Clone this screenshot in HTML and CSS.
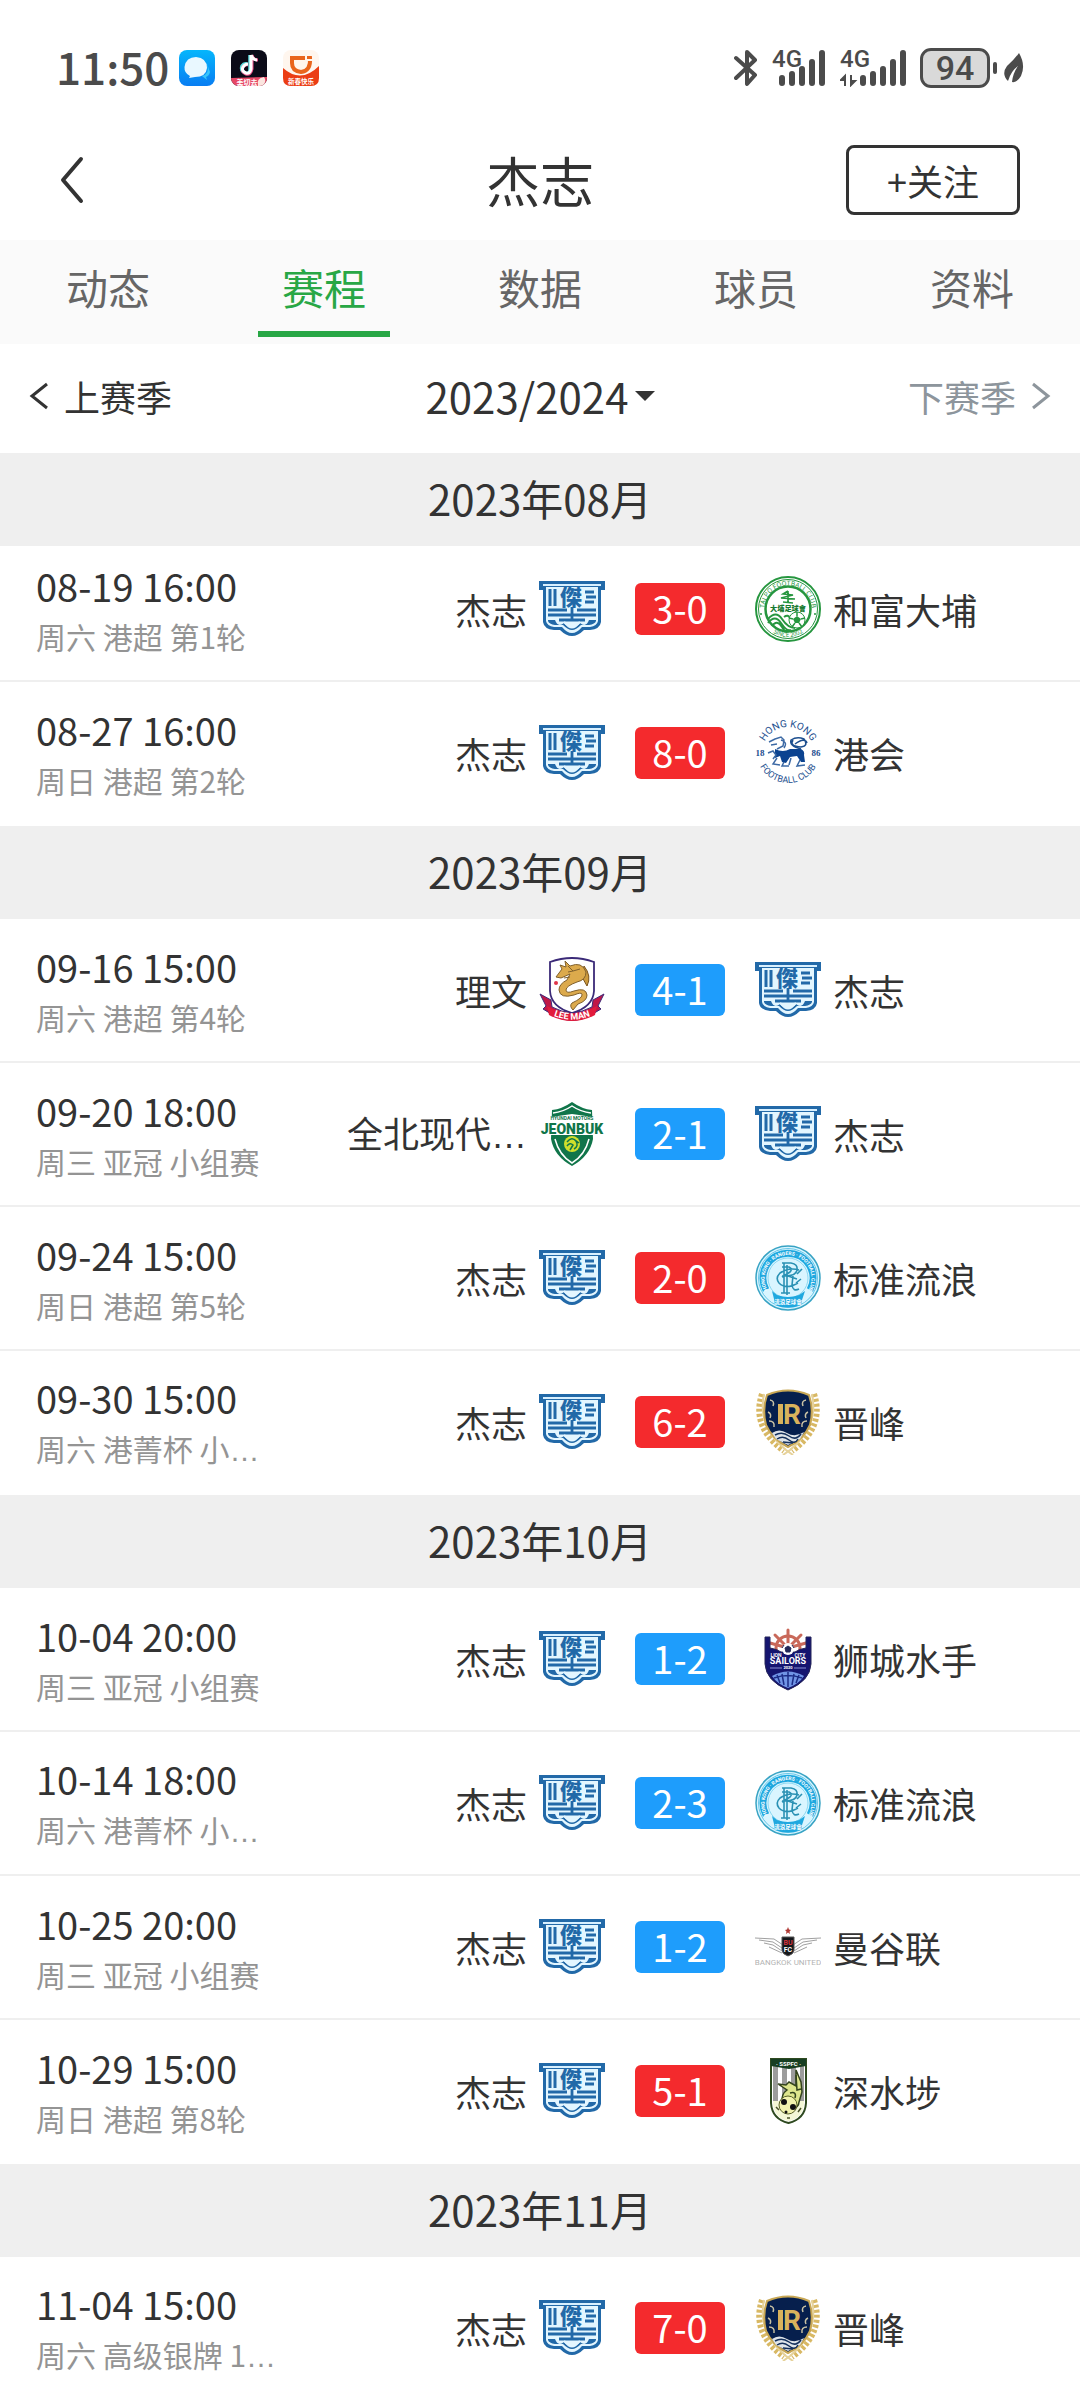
FILE: index.html
```
<!DOCTYPE html>
<html lang="zh-CN">
<head>
  <meta charset="UTF-8">
  <title>杰志 - 赛程</title>
  <meta name="viewport" content="width=device-width, initial-scale=1.0">
  <link rel="stylesheet" href="styles.css">
</head>
<body>
  <!-- Club crests, reused by the match rows -->
  <svg class="sprite" aria-hidden="true">
    <symbol id="kitchee" viewBox="0 0 66 66">
      <path d="M0 5H66V14H62V46Q61 53 51 54L45 54Q39 60 33 60Q27 60 21 54L15 54Q5 53 4 46V14H0Z" fill="#2269a8"/>
      <path d="M4 9H62" stroke="#d8f0ff" stroke-width="2"/>
      <path d="M7 11H59V45Q58 50 51 51L43 51Q38 57 33 57Q28 57 23 51L15 51Q8 50 7 45Z" fill="#e3f6ff"/>
      <path d="M11 13V30M16 13V30M55 16H46M57 21H47M55 26H46" stroke="#2269a8" stroke-width="3"/>
      <text x="32" y="29" text-anchor="middle" font-size="22" font-weight="900" fill="#2269a8">傑</text>
      <path d="M9 34H28M38 34H57M9 39H57M33 31V43M20 44H46" stroke="#2269a8" stroke-width="2.8" fill="none"/>
      <path d="M9 44H16Q19 52 25 47Q33 58 41 47Q47 52 50 44H57V45Q56 48 50 49H42Q37 54 33 54Q29 54 24 49H16Q10 48 9 45Z" fill="#2269a8"/>
      <path d="M25 46Q33 54 41 46" fill="none" stroke="#e3f6ff" stroke-width="2"/>
    </symbol>

    <symbol id="taipo" viewBox="0 0 66 66">
      <circle cx="33" cy="33" r="32" fill="#fff" stroke="#26963f" stroke-width="2"/>
      <circle cx="33" cy="33" r="29.500" fill="none" stroke="#26963f"/>
      <circle cx="33" cy="33" r="22.500" fill="#fff" stroke="#26963f" stroke-width="2.500"/>
      <path id="tp-top" d="M9.500 33A23.500 23.500 0 0 1 56.500 33" fill="none"/>
      <path id="tp-low" d="M5 33A28 28 0 0 0 61 33" fill="none"/>
      <text font-size="6.500" fill="#26963f" text-anchor="middle"><textPath href="#tp-top" startOffset="50%">TAI PO FOOTBALL CLUB</textPath></text>
      <text font-size="6" fill="#26963f" text-anchor="middle"><textPath href="#tp-low" startOffset="50%">SINCE 2002</textPath></text>
      <path d="M33 15L28 18L38 19L26 22L40 23M28 26L38 27M33 15V27" fill="none" stroke="#26963f" stroke-width="1.600"/>
      <text x="33" y="35" font-size="7.200" font-weight="900" fill="#167a30" text-anchor="middle">大埔足球會</text>
      <path d="M13 43Q21 34 27 43T40 52M13 47Q20 38 26 47T36 54M17 50Q22 43 27 51T32 54M29 41Q33 38 35 42" fill="none" stroke="#26963f" stroke-width="2"/>
      <circle cx="42" cy="44" r="8" fill="#fff" stroke="#26963f"/>
      <path d="M42 40L46 43L44 47H40L38 43Z" fill="#26963f"/>
      <path d="M42 36V40M46 43L50 42M44 47L47 51M40 47L37 51M38 43L34 42" stroke="#26963f" stroke-width="1.500"/>
      <circle cx="6" cy="38" r="1" fill="#26963f"/><circle cx="60" cy="38" r="1" fill="#26963f"/>
    </symbol>

    <symbol id="hkfc" viewBox="0 0 66 66">
      <path id="hk-top" d="M7 33A26 26 0 0 1 59 33" fill="none"/>
      <path id="hk-low" d="M1 31A32 32 0 0 0 65 31" fill="none"/>
      <g fill="#1d4f8f" text-anchor="middle">
        <text class="crest-latin" font-size="10"><textPath href="#hk-top" startOffset="50%">HONG KONG</textPath></text>
        <text class="crest-latin" font-size="9"><textPath href="#hk-low" startOffset="50%">FOOTBALL CLUB</textPath></text>
        <text class="crest-serif" x="5" y="36" font-size="9" font-weight="700">18</text>
        <text class="crest-serif" x="61" y="36" font-size="9" font-weight="700">86</text>
      </g>
      <path d="M20 29Q28 33 35 29L46 29Q50 31 49 35L50 42H46L42 36L35 37L31 43L27 42L25 36L20 38Z" fill="#0c4390"/>
      <path d="M14 22L20 19L26 17L29 20L28 26L22 29M16 25L22 24M13 33L18 31L21 35L18 39M22 38L18 44L25 45M29 42L27 46L34 46M36 38L34 45M45 40L42 46L50 45M26 20Q33 22 29 28" fill="none" stroke="#3d6aa5" stroke-width="1.500"/>
      <path d="M46 29Q34 26 36 20Q42 16 49 19Q54 26 46 27Q34 26 38 20M40 24Q50 17 52 23" fill="none" stroke="#1d4f8f" stroke-width="1.500"/>
    </symbol>

    <symbol id="leeman" viewBox="0 0 66 66">
      <path d="M1 37L12 43L13 50Q33 61 53 50L54 43L65 37L59 49L62 52L52 58Q33 69 14 58L4 52L7 49Z" fill="#c01747" stroke="#3e2a78"/>
      <path d="M11 5Q33 -3 55 5V34Q54 50 33 56Q12 50 11 34Z" fill="#fff" stroke="#3b2a78" stroke-width="1.800"/>
      <path d="M8 49Q33 64 58 49L56 58Q33 70 10 58Z" fill="#e21b3c"/>
      <path id="lm-arc" d="M10 57Q33 68 56 57" fill="none"/>
      <text class="crest-latin" font-size="9" font-weight="700" fill="#fff" text-anchor="middle"><textPath href="#lm-arc" startOffset="50%">LEE MAN</textPath></text>
      <path d="M45 9Q53 19 48 29L43 20Z" fill="#cc9a3e" stroke="#7a531d"/>
      <path d="M17 20L23 12L21 8L27 10L26 4L31 9Q43 4 47 15Q47 23 38 25Q27 29 27 33Q27 37 35 34Q47 30 48 38Q48 44 39 47L34 53Q30 49 33 46Q44 41 43 37Q42 35 35 38Q21 42 20 33Q20 27 28 23L31 17L22 21Z" fill="#dcaa4c" stroke="#80602c"/>
      <path d="M29 9L34 14L29 15M34 14L41 12M25 21L31 20" fill="none" stroke="#80602c"/>
      <circle cx="17" cy="26" r="2" fill="#e03448"/>
    </symbol>

    <symbol id="jeonbuk" viewBox="0 0 66 66">
      <path d="M33 1Q43 8 53 9L54 38Q51 55 33 65Q15 55 12 38L13 9Q23 8 33 1Z" fill="#10754a"/>
      <path d="M14 12Q24 11 33 5Q42 11 52 12" fill="none" stroke="#fff" stroke-width="1.500"/>
      <path d="M12 16L33 13L54 16V21H12ZM1 20H65V34H1Z" fill="#fff"/>
      <text class="crest-latin" x="33" y="19" font-size="5" font-weight="700" fill="#10754a" text-anchor="middle">HYUNDAI MOTORS</text>
      <text class="crest-latin" x="33" y="33" font-size="14" font-weight="900" fill="#10754a" text-anchor="middle">JEONBUK</text>
      <path d="M16 38Q20 54 33 62Q46 54 50 38" fill="none" stroke="#fff" stroke-width="1.500"/>
      <circle cx="33" cy="43" r="8" fill="#d0de2c"/>
      <path d="M28 41Q33 35 37 40Q40 45 35 48M28 45Q31 41 34 44L31 49M36 39L40 42" fill="none" stroke="#10754a" stroke-width="1.500"/>
    </symbol>

    <symbol id="rangers" viewBox="0 0 66 66">
      <circle cx="33" cy="33" r="32" fill="#d9f5ff" stroke="#38a3c4" stroke-width="1.500"/>
      <circle cx="33" cy="33" r="29.500" fill="none" stroke="#67c7e8"/>
      <path d="M11 45A25 25 0 1 1 55 45" fill="none" stroke="#1fa8df" stroke-width="7"/>
      <circle cx="33" cy="33" r="20" fill="none" stroke="#8cd9f2"/>
      <path id="rg-top" d="M12 44A23.500 23.500 0 1 1 54 44" fill="none"/>
      <text class="crest-latin" font-size="5" font-weight="700" fill="#fff" text-anchor="middle"><textPath href="#rg-top" startOffset="50%">HONG KONG · RANGERS · FOOTBALL CLUB</textPath></text>
      <path d="M17 46L22 50Q33 54 44 50L50 46L47 55L46 60Q33 65 20 60L19 54Z" fill="#1fa8df"/>
      <text x="33" y="59" font-size="5.500" font-weight="700" fill="#fff" text-anchor="middle">流浪足球會</text>
      <path d="M27 18H36Q43 19 42 25Q41 31 30 31H27M29 18V48M32 20V50M26 48H35M38 31L37 40Q38 47 44 44M44 25Q34 22 25 28Q20 33 24 38Q31 45 43 38M47 24L42 29M33 31L42 34M46 34L41 38M27 22H34Q38 24 35 27L27 32" fill="none" stroke="#2a91b4" stroke-width="1.600"/>
    </symbol>

    <symbol id="rcfc" viewBox="0 0 66 66">
      <g fill="none" stroke="#d8b864" stroke-width="6" stroke-dasharray="3 2">
        <path d="M7 5Q-4 38 29 62"/>
        <path d="M59 5Q70 38 37 62"/>
      </g>
      <g fill="none" stroke="#e6d29a" stroke-width="2">
        <path d="M9 5Q2 37 31 61L38 66M57 5Q64 37 35 61L28 66"/>
      </g>
      <path d="M12 6Q33 -3 54 6Q59 20 55 36Q49 50 33 58Q17 50 11 36Q7 20 12 6Z" fill="#061f4d" stroke="#c8a754" stroke-width="2"/>
      <path d="M15 11Q20 12 18 17M51 11Q46 12 48 17M13 23Q17 25 15 29M53 23Q49 25 51 29M14 32Q20 32 19 38M52 32Q46 32 47 38" fill="none" stroke="#c9c2a4" stroke-width="1.500"/>
      <path d="M17 44Q24 39 32 44T49 43L45 50L33 56L21 50Z" fill="#dfe4e9"/>
      <path d="M20 46Q27 42 34 47T46 45M22 50Q28 46 34 51T43 50M28 53L38 54" fill="none" stroke="#14305c" stroke-width="1.500"/>
      <path d="M23 15H28V35H23Z" fill="#d9b25c"/>
      <text class="crest-latin" x="37" y="35" font-size="28" font-weight="700" fill="#d9b25c" text-anchor="middle">R</text>
    </symbol>

    <symbol id="sailors" viewBox="0 0 66 66">
      <g fill="none" stroke="#c9695a" stroke-width="3" stroke-linecap="round">
        <circle cx="33" cy="22" r="12"/>
        <path d="M33 22V4M33 22L20 9M33 22L46 9M33 22L15 17M33 22L51 17"/>
      </g>
      <path d="M10 11H15V22Q22 23 26 26H40Q44 23 51 22V11H56V38Q55 55 33 64Q11 55 10 38Z" fill="#151570" stroke="#252558"/>
      <circle cx="33" cy="23" r="6" fill="#fff"/>
      <path d="M33 20L36 22L35 26H31L30 22ZM27 22L29 19M39 22L37 19" fill="#222858" stroke="#222858"/>
      <g class="crest-latin" fill="#fff" text-anchor="middle" font-weight="700">
        <text x="21" y="31" font-size="5">LION</text>
        <text x="45" y="31" font-size="5">CITY</text>
        <text x="33" y="38" font-size="9">SAILORS</text>
        <text x="33" y="43" font-size="4">2020</text>
      </g>
      <path d="M15 42H27M39 42H51" stroke="#8790d4"/>
      <path d="M17 50Q33 41 49 50Q44 58 33 62Q22 58 17 50Z" fill="#7195e6"/>
      <path d="M22 49L25 57M27 48L29 59M33 46V61M39 48L37 59M44 49L41 57M19 52Q33 47 47 52" fill="none" stroke="#1b2c86" stroke-width="1.500"/>
    </symbol>

    <symbol id="bangkok" viewBox="0 0 66 66">
      <path d="M33 13L34 15.500L36 16L34.500 17.500L35 20L33 18.500L31 20L31.500 17.500L30 16L32 15.500Z" fill="#b03a35"/>
      <g fill="none" stroke="#a0a0a0">
        <path d="M0 24L19 25L28 31M4 26L18 28L27 34M9 29L18 31L27 37M14 33L27 39"/>
        <path d="M66 24L47 25L38 31M62 26L48 28L39 34M57 29L48 31L39 37M52 33L39 39"/>
      </g>
      <path d="M27 23H39V36Q39 40 33 42Q27 40 27 36Z" fill="#15171a" stroke="#555"/>
      <text class="crest-latin" x="33" y="31" font-size="7" font-weight="700" fill="#d8343f" text-anchor="middle">BU</text>
      <text class="crest-latin" x="33" y="38" font-size="7" font-weight="700" fill="#fff" text-anchor="middle">FC</text>
      <text class="crest-latin" x="33" y="51" font-size="8" fill="#b3b3b3" text-anchor="middle">BANGKOK UNITED</text>
    </symbol>

    <symbol id="sspfc" viewBox="0 0 66 66">
      <path d="M16 1H51V45Q50 61 33.500 65Q17 61 16 45Z" fill="#fff" stroke="#2f4a20" stroke-width="2"/>
      <path d="M18 8H23V43H18ZM27 8H32V43H27ZM36 8H41V43H36ZM45 8H49V43H45Z" fill="#9c9c9c"/>
      <path d="M16 1H51V8L34 11L16 8Z" fill="#173e22"/>
      <text class="crest-latin" x="33.500" y="7.500" font-size="6" font-weight="700" fill="#fff" text-anchor="middle">· SSPFC ·</text>
      <path d="M18 43H49Q49 60 33.500 63Q18 60 18 43Z" fill="#f4f7d6"/>
      <path d="M23 26L31 27L34 24L41 28L41 12L46 24L47 34L44 44Q44 50 35 52L27 45Q26 36 32 32Z" fill="#dde58d" stroke="#33431d" stroke-width="1.500"/>
      <path d="M41 17L42 32L46 31M35 35Q42 33 40 40" fill="none" stroke="#33431d" stroke-width="1.500"/>
      <circle cx="33" cy="47" r="9" fill="#f2f3ae" stroke="#596128"/>
      <circle cx="29" cy="44" r="3" fill="#111"/><circle cx="38" cy="49" r="3" fill="#111"/><circle cx="31" cy="54" r="1.500" fill="#111"/>
      <path d="M21 49L24 52M43 54L46 50M32 60H35" stroke="#48512a" stroke-width="1.500"/>
    </symbol>
  </svg>

  <div class="app">
    <div class="status-bar">
      <span class="clock">11:50</span>
      <div class="status-apps">
        <svg viewBox="0 0 36 36" aria-hidden="true">
          <defs><linearGradient id="msg" x2="0" y2="1"><stop stop-color="#05b6fc"/><stop offset="1" stop-color="#087df2"/></linearGradient></defs>
          <rect width="36" height="36" rx="8" fill="url(#msg)"/>
          <path d="M23 26Q31 24 28 14L31 22Q30 26 27 27L28 30Z" fill="#36c5fa"/>
          <path d="M10 28L11 26Q5 23 5.500 17Q7 7 17 7Q28 8 28 18Q27 27 16 27Z" fill="#e9f8ff"/>
        </svg>
        <svg viewBox="0 0 36 36" aria-hidden="true">
          <clipPath id="tile"><rect width="36" height="36" rx="8"/></clipPath>
          <g clip-path="url(#tile)">
            <rect width="36" height="36" fill="#0b0b18"/>
            <path d="M19 5V19Q19 24 14.500 23Q9 21 11 16Q13 13 16 14" fill="none" stroke="#5bdde0" stroke-width="3.500"/>
            <path d="M21 5V19Q20 25 15 24Q10 22 12 17Q14 14 17 15M21 5Q22 10 27 10" fill="none" stroke="#f0508a" stroke-width="3"/>
            <path d="M20 5V19Q19 24 15 23Q10 21 12 17Q14 14 17 14M20 5Q22 10 26 10" fill="none" stroke="#fff" stroke-width="3"/>
            <path d="M0 28L36 27V36H0Z" fill="#e64766"/>
            <text x="16" y="34.500" font-size="7" font-weight="700" fill="#fff" text-anchor="middle">美切去</text>
            <path d="M27 36Q25 28 33 27Q36 31 32 36Z" fill="#fbe6e0"/>
          </g>
        </svg>
        <svg viewBox="0 0 36 36" aria-hidden="true">
          <rect width="36" height="36" rx="8" fill="#fff6ee"/>
          <path d="M0 18Q18 34 36 16V28Q36 36 28 36H8Q0 36 0 28Z" fill="#eb3d14"/>
          <path d="M9 8H27Q28 21 18 22Q9 21 9 13Z" fill="#fff6ee" stroke="#e9651c" stroke-width="4"/>
          <path d="M23 5V10H30" fill="none" stroke="#fff6ee" stroke-width="2"/>
          <text x="18" y="33.500" font-size="6.500" font-weight="700" fill="#fff" text-anchor="middle">新春快乐</text>
        </svg>
      </div>
      <div class="status-icons">
        <svg class="bluetooth" viewBox="0 0 24 38" aria-hidden="true"><path d="M2 9L21 26L13 35V3L21 11L2 29" fill="none" stroke="#4b4b4b" stroke-width="4" stroke-linejoin="round" stroke-linecap="round"/></svg>
        <svg class="signal" viewBox="0 0 54 38" aria-hidden="true">
          <text x="0" y="18" font-size="24" class="crest-latin">4G</text>
          <path d="M10 29V34M20 25V34M30 20V34M40 13V34M50 4V34" stroke="#4b4b4b" stroke-width="6" stroke-linecap="round"/>
        </svg>
        <svg class="signal-wide" viewBox="0 0 66 38" aria-hidden="true">
          <text x="0" y="18" font-size="24" class="crest-latin">4G</text>
          <path d="M5 37V27L1 31H5M11 26V36L15 32H11" fill="#4b4b4b" stroke="#4b4b4b" stroke-width="2"/>
          <path d="M23 29V34M33 25V34M43 20V34M53 13V34M63 4V34" stroke="#4b4b4b" stroke-width="6" stroke-linecap="round"/>
        </svg>
        <span class="battery">94</span>
        <svg class="leaf" viewBox="0 0 20 30" aria-hidden="true">
          <path d="M15 0Q22 12 17 23Q13 30 8 29Q9 20 14 13Q7 18 4 28Q-3 21 3 13Q10 7 15 0Z" fill="#4b4b4b"/>
        </svg>
      </div>
    </div>

    <header class="nav-bar">
      <a class="back" href="#" aria-label="返回">
        <svg viewBox="0 0 24 48"><path d="M21 3L3 24L21 45" fill="none" stroke="#333" stroke-width="4" stroke-linecap="round" stroke-linejoin="round"/></svg>
      </a>
      <h1>杰志</h1>
      <button class="follow" type="button">+关注</button>
    </header>

    <nav class="tabs">
      <a href="#">动态</a>
      <a href="#" class="active" aria-current="page">赛程</a>
      <a href="#">数据</a>
      <a href="#">球员</a>
      <a href="#">资料</a>
    </nav>

    <div class="season-bar">
      <button class="season-step" type="button">
        <svg viewBox="0 0 20 28" aria-hidden="true"><path d="M18 2L3 14L18 26" fill="none" stroke="currentColor" stroke-width="3"/></svg>
        上赛季
      </button>
      <div class="season-pick">
        <select aria-label="赛季"><option>2023/2024</option></select>
        <svg viewBox="0 0 20 10" aria-hidden="true"><path d="M0 0H20L10 10Z" fill="#333"/></svg>
      </div>
      <button class="season-step next" type="button" disabled>
        下赛季
        <svg viewBox="0 0 20 28" aria-hidden="true"><path d="M2 2L17 14L2 26" fill="none" stroke="currentColor" stroke-width="3"/></svg>
      </button>
    </div>

    <main class="schedule">
      <section class="month">
        <h2>2023年08月</h2>
        <ul>
          <li class="match">
            <div class="when"><time>08-19 16:00</time><span>周六 港超 第1轮</span></div>
            <div class="team home">杰志<svg><use href="#kitchee"/></svg></div>
            <div class="score win">3-0</div>
            <div class="team"><svg><use href="#taipo"/></svg>和富大埔</div>
          </li>
          <li class="match">
            <div class="when"><time>08-27 16:00</time><span>周日 港超 第2轮</span></div>
            <div class="team home">杰志<svg><use href="#kitchee"/></svg></div>
            <div class="score win">8-0</div>
            <div class="team"><svg><use href="#hkfc"/></svg>港会</div>
          </li>
        </ul>
      </section>

      <section class="month">
        <h2>2023年09月</h2>
        <ul>
          <li class="match">
            <div class="when"><time>09-16 15:00</time><span>周六 港超 第4轮</span></div>
            <div class="team home">理文<svg><use href="#leeman"/></svg></div>
            <div class="score lose">4-1</div>
            <div class="team"><svg><use href="#kitchee"/></svg>杰志</div>
          </li>
          <li class="match">
            <div class="when"><time>09-20 18:00</time><span>周三 亚冠 小组赛</span></div>
            <div class="team home"><p>全北现代<i>…</i></p><svg><use href="#jeonbuk"/></svg></div>
            <div class="score lose">2-1</div>
            <div class="team"><svg><use href="#kitchee"/></svg>杰志</div>
          </li>
          <li class="match">
            <div class="when"><time>09-24 15:00</time><span>周日 港超 第5轮</span></div>
            <div class="team home">杰志<svg><use href="#kitchee"/></svg></div>
            <div class="score win">2-0</div>
            <div class="team"><svg><use href="#rangers"/></svg>标准流浪</div>
          </li>
          <li class="match">
            <div class="when"><time>09-30 15:00</time><span>周六 港菁杯 小<i>…</i></span></div>
            <div class="team home">杰志<svg><use href="#kitchee"/></svg></div>
            <div class="score win">6-2</div>
            <div class="team"><svg><use href="#rcfc"/></svg>晋峰</div>
          </li>
        </ul>
      </section>

      <section class="month">
        <h2>2023年10月</h2>
        <ul>
          <li class="match">
            <div class="when"><time>10-04 20:00</time><span>周三 亚冠 小组赛</span></div>
            <div class="team home">杰志<svg><use href="#kitchee"/></svg></div>
            <div class="score lose">1-2</div>
            <div class="team"><svg><use href="#sailors"/></svg>狮城水手</div>
          </li>
          <li class="match">
            <div class="when"><time>10-14 18:00</time><span>周六 港菁杯 小<i>…</i></span></div>
            <div class="team home">杰志<svg><use href="#kitchee"/></svg></div>
            <div class="score lose">2-3</div>
            <div class="team"><svg><use href="#rangers"/></svg>标准流浪</div>
          </li>
          <li class="match">
            <div class="when"><time>10-25 20:00</time><span>周三 亚冠 小组赛</span></div>
            <div class="team home">杰志<svg><use href="#kitchee"/></svg></div>
            <div class="score lose">1-2</div>
            <div class="team"><svg><use href="#bangkok"/></svg>曼谷联</div>
          </li>
          <li class="match">
            <div class="when"><time>10-29 15:00</time><span>周日 港超 第8轮</span></div>
            <div class="team home">杰志<svg><use href="#kitchee"/></svg></div>
            <div class="score win">5-1</div>
            <div class="team"><svg><use href="#sspfc"/></svg>深水埗</div>
          </li>
        </ul>
      </section>

      <section class="month">
        <h2>2023年11月</h2>
        <ul>
          <li class="match">
            <div class="when"><time>11-04 15:00</time><span>周六 高级银牌 1<i>…</i></span></div>
            <div class="team home">杰志<svg><use href="#kitchee"/></svg></div>
            <div class="score win">7-0</div>
            <div class="team"><svg><use href="#rcfc"/></svg>晋峰</div>
          </li>
        </ul>
      </section>
    </main>
  </div>
</body>
</html>
```
FILE: styles.css
```
* {
  box-sizing: border-box;
}
body {
  margin: 0;
  font-family: "Noto Sans CJK SC", sans-serif;
  color: #333;
  background: #fff;
}
h1, h2, ul, p {
  margin: 0;
  padding: 0;
  font-weight: 400;
  list-style: none;
}
a {
  color: inherit;
  text-decoration: none;
}
button, select {
  font: inherit;
  color: inherit;
  background: none;
  border: 0;
  padding: 0;
  margin: 0;
  cursor: pointer;
}
svg {
  display: block;
  flex: none;
}
/* keeps the ellipsis dots on the baseline */
i {
  font-family: "Liberation Sans", sans-serif;
  font-style: normal;
}
.sprite {
  display: none;
}
.crest-latin {
  font-family: Roboto, sans-serif;
}
.crest-serif {
  font-family: "Liberation Serif", serif;
}
.app {
  display: flex;
  flex-direction: column;
  height: 100vh;
  overflow: hidden;
}

/* Status bar */
.status-bar {
  flex: none;
  display: flex;
  align-items: center;
  height: 120px;
  padding: 16px 56px 0;
  color: #4b4b4b;
}
.clock {
  padding-bottom: 4px;
  font-size: 44px;
  font-weight: 500;
  line-height: 52px;
}
.status-apps {
  display: flex;
  gap: 16px;
  margin-left: 10px;
}
.status-apps svg {
  width: 36px;
  height: 36px;
}
.status-icons {
  display: flex;
  align-items: center;
  gap: 14px;
  margin-left: auto;
}
.status-icons text {
  fill: #4b4b4b;
  font-weight: 500;
}
.bluetooth { width: 24px; height: 38px; }
.signal { width: 54px; height: 38px; }
.signal-wide { width: 66px; height: 38px; }
.leaf { width: 20px; height: 30px; }
.battery {
  position: relative;
  width: 70px;
  height: 40px;
  border: 3px solid #4b4b4b;
  border-radius: 11px;
  background: #d9d9d9;
  font-family: Roboto, sans-serif;
  font-size: 34px;
  font-weight: 500;
  line-height: 34px;
  text-align: center;
}
.battery::after {
  content: "";
  position: absolute;
  top: 11px;
  right: -10px;
  width: 4px;
  height: 12px;
  border-radius: 2px;
  background: #4b4b4b;
}

/* Title bar */
.nav-bar {
  flex: none;
  display: grid;
  grid-template-columns: 1fr auto 1fr;
  align-items: center;
  height: 120px;
  padding: 0 60px;
}
.back svg {
  width: 24px;
  height: 48px;
}
.nav-bar h1 {
  font-size: 54px;
  line-height: 72px;
}
.follow {
  justify-self: end;
  width: 174px;
  height: 70px;
  border: 3px solid #333;
  border-radius: 8px;
  font-size: 36px;
  line-height: 60px;
}

/* Tabs */
.tabs {
  flex: none;
  display: grid;
  grid-template-columns: repeat(5, 1fr);
  justify-items: center;
  height: 104px;
  background: #fafafa;
  color: #666;
  font-size: 42px;
}
.tabs a {
  width: 132px;
  height: 97px;
  line-height: 94px;
  text-align: center;
}
.tabs .active {
  color: #28a745;
  border-bottom: 6px solid #28a745;
}

/* Season switcher */
.season-bar {
  flex: none;
  display: grid;
  grid-template-columns: 1fr auto 1fr;
  align-items: center;
  height: 109px;
  padding: 0 29px 6px;
}
.season-step {
  justify-self: start;
  display: flex;
  align-items: center;
  gap: 15px;
  font-size: 36px;
}
.season-step svg {
  width: 20px;
  height: 28px;
}
.season-step.next {
  justify-self: end;
  color: #8d959c;
}
.season-pick {
  display: flex;
  align-items: center;
  gap: 6px;
}
.season-pick select {
  appearance: none;
  font-size: 42px;
}
.season-pick svg {
  width: 20px;
  height: 10px;
}

/* Schedule */
.schedule {
  flex: 1;
  min-height: 0;
  overflow-y: auto;
  scrollbar-width: none;
}
.month h2 {
  position: sticky;
  top: 0;
  z-index: 1;
  height: 93px;
  background: #efefef;
  font-size: 42px;
  line-height: 90px;
  text-align: center;
}
/* the list starts slightly scrolled under its heading */
.month:first-child ul {
  margin-top: -8px;
}
.match {
  display: grid;
  grid-template-columns: 244px 1fr 150px 1fr;
  align-items: center;
  height: 144px;
  padding-left: 36px;
  border-bottom: 2px solid #efefef;
}
.match:last-child {
  border-bottom-color: transparent;
}
.when {
  padding-top: 4px;
  white-space: nowrap;
}
.when time, .when span {
  display: block;
  line-height: 50px;
}
.when time {
  font-size: 38px;
}
.when span {
  font-size: 30px;
  color: #949494;
}
.team {
  display: flex;
  align-items: center;
  gap: 12px;
  font-size: 36px;
  line-height: 50px;
  white-space: nowrap;
}
.team svg {
  width: 66px;
  height: 66px;
}
.home {
  justify-content: flex-end;
}
.score {
  justify-self: center;
  width: 90px;
  height: 52px;
  border-radius: 6px;
  color: #fff;
  font-size: 38px;
  line-height: 50px;
  text-align: center;
}
.win { background: #f42a2d; }
.lose { background: #1e9dfc; }
```
